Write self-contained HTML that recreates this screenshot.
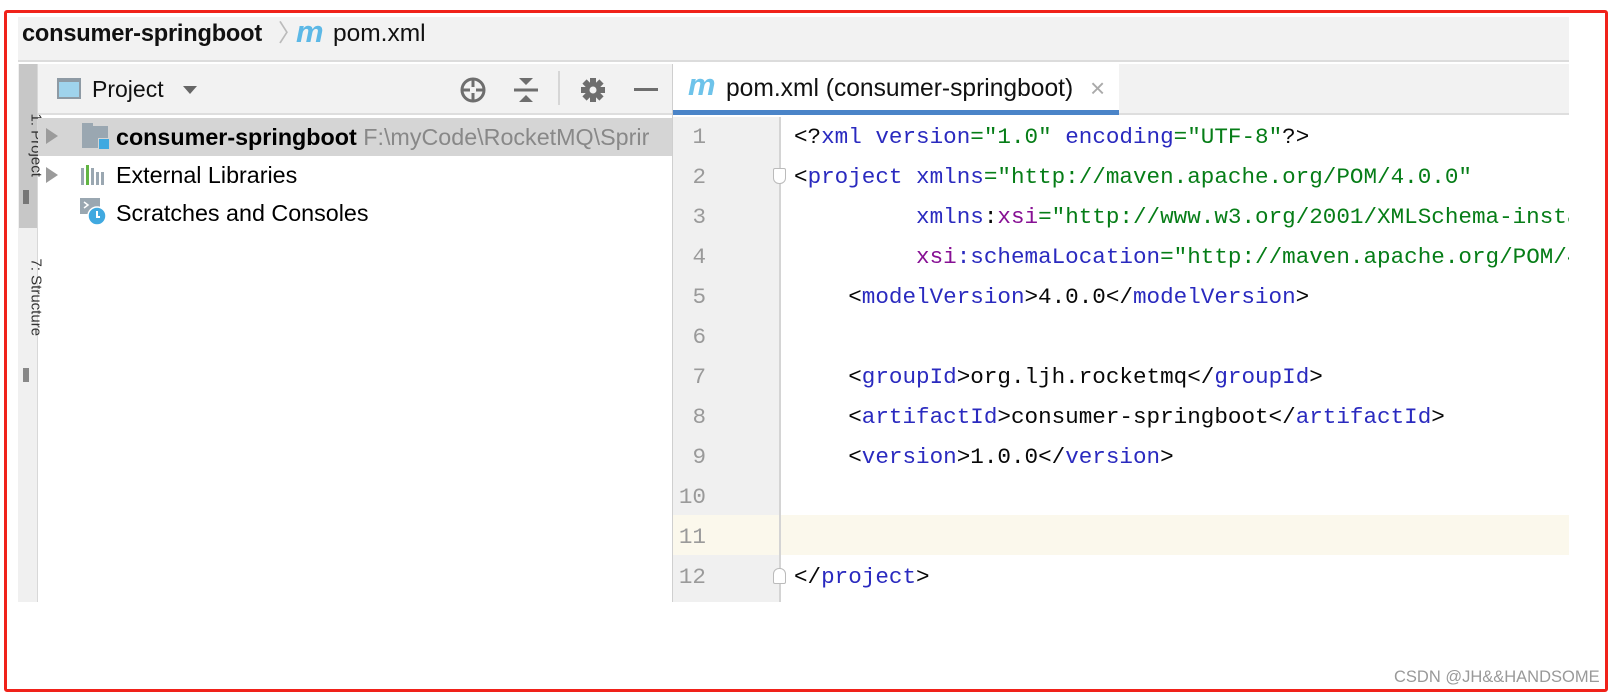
<!DOCTYPE html>
<html><head><meta charset="utf-8"><style>
*{margin:0;padding:0;box-sizing:border-box}
body{width:1611px;height:696px;background:#fff;position:relative;overflow:hidden;font-family:"Liberation Sans",sans-serif}
.abs{position:absolute}
.border{left:4px;top:10px;width:1604px;height:682px;border:3px solid #f0221a;border-radius:3px}
.mono{font-family:"Liberation Mono",monospace;font-size:22.6px;white-space:pre}
.ln{left:673px;width:107px;text-align:right;padding-right:74px;color:#9a9a9a;height:40px;line-height:40px}
.cl{left:794px;height:40px;line-height:40px;color:#080808}
.t{color:#2a2abf}.s{color:#067d17}.p{color:#871094}
.row{left:116px;font-size:23.3px;color:#000;height:38px;line-height:38px;white-space:nowrap}
</style></head><body>
<!-- breadcrumb -->
<div class="abs" style="left:18px;top:17px;width:1551px;height:45px;background:#f2f2f2;border-bottom:2px solid #dcdcdc"></div>
<div class="abs" style="left:22px;top:19px;font-size:23.6px;font-weight:bold;line-height:30px;color:#111;letter-spacing:-0.2px">consumer-springboot</div>
<div class="abs" style="left:278px;top:19px;font-size:24px;color:#bbb;line-height:30px">〉</div>
<div class="abs" style="left:296px;top:15px;font-size:31px;font-style:italic;font-weight:bold;color:#5cb8e6;line-height:34px">m</div>
<div class="abs" style="left:333px;top:19px;font-size:24.5px;line-height:30px;color:#111">pom.xml</div>
<!-- left strip -->
<div class="abs" style="left:18px;top:64px;width:20px;height:538px;background:#f0f0f0;border-right:1px solid #d8d8d8"></div>
<div class="abs" style="left:19px;top:64px;width:18px;height:164px;background:#c7c7c7"></div>
<div class="abs" style="left:23px;top:190px;width:6px;height:14px;background:#777"></div>
<div class="abs" style="left:23px;top:368px;width:6px;height:14px;background:#888"></div>
<div class="abs" style="left:6px;top:135px;transform:rotate(90deg);font-size:15px;color:#333;white-space:nowrap;width:60px">1: Project</div>
<div class="abs" style="left:-4px;top:290px;transform:rotate(90deg);font-size:15px;color:#333;white-space:nowrap;width:80px">7: Structure</div>
<!-- project header -->
<div class="abs" style="left:38px;top:64px;width:634px;height:51px;background:#f2f2f2;border-bottom:2px solid #dedede"></div>
<div class="abs" style="left:57px;top:78px;width:24px;height:21px;border:2px solid #8e9aa4;background:#9fd3ec;border-top-width:4px"></div>
<div class="abs" style="left:92px;top:74px;font-size:23px;line-height:30px;color:#111">Project</div>
<div class="abs" style="left:183px;top:86px;width:0;height:0;border-left:7px solid transparent;border-right:7px solid transparent;border-top:8px solid #666"></div>
<svg class="abs" style="left:458px;top:75px" width="30" height="30" viewBox="0 0 30 30"><circle cx="15" cy="15" r="11" fill="none" stroke="#6e6e6e" stroke-width="3"/><path d="M15 4v8M15 18v8M4 15h8M18 15h8" stroke="#6e6e6e" stroke-width="3"/></svg>
<svg class="abs" style="left:513px;top:76px" width="26" height="28" viewBox="0 0 26 28"><path d="M6 2h14l-7 7z M6 26h14l-7-7z" fill="#6e6e6e"/><rect x="1" y="12.5" width="24" height="3" fill="#6e6e6e"/></svg>
<div class="abs" style="left:558px;top:71px;width:2px;height:34px;background:#d6d6d6"></div>
<svg class="abs" style="left:580px;top:77px" width="26" height="26" viewBox="0 0 26 26"><g fill="#6e6e6e"><circle cx="13" cy="13" r="8"/><rect x="10" y="1" width="6" height="24"/><rect x="1" y="10" width="24" height="6"/><rect x="10" y="1" width="6" height="24" transform="rotate(45 13 13)"/><rect x="10" y="1" width="6" height="24" transform="rotate(-45 13 13)"/></g><circle cx="13" cy="13" r="3.5" fill="#f2f2f2"/></svg>
<div class="abs" style="left:634px;top:88px;width:24px;height:3px;background:#6e6e6e"></div>
<!-- project rows -->
<div class="abs" style="left:38px;top:118px;width:634px;height:38px;background:#d5d5d5"></div>
<div class="abs" style="left:46px;top:128px;border-top:8px solid transparent;border-bottom:8px solid transparent;border-left:12px solid #9b9b9b"></div>
<div class="abs" style="left:46px;top:167px;border-top:8px solid transparent;border-bottom:8px solid transparent;border-left:12px solid #9b9b9b"></div>
<div class="abs" style="left:82px;top:126px;width:26px;height:22px;background:#9aa7b1"></div>
<div class="abs" style="left:82px;top:123px;width:11px;height:5px;background:#9aa7b1"></div>
<div class="abs" style="left:98px;top:138px;width:12px;height:12px;background:#40a9e0;border:1px solid #d5d5d5"></div>
<div class="row abs" style="top:118px;width:556px;overflow:hidden"><b>consumer-springboot</b> <span style="color:#888">F:\myCode\RocketMQ\Sprir</span></div>
<svg class="abs" style="left:80px;top:163px" width="28" height="24"><rect x="1" y="5" width="3" height="17" fill="#9aa7b1"/><rect x="6" y="2" width="3" height="20" fill="#62b543"/><rect x="11" y="5" width="3" height="17" fill="#9aa7b1"/><rect x="16" y="9" width="3" height="13" fill="#9aa7b1"/><rect x="21" y="9" width="3" height="13" fill="#9aa7b1"/></svg>
<div class="row abs" style="top:156px">External Libraries</div>
<svg class="abs" style="left:80px;top:198px" width="30" height="28"><rect x="0" y="0" width="20" height="16" fill="#9aa7b1"/><path d="M4 4l4 3-4 3" stroke="#fff" stroke-width="1.5" fill="none"/><circle cx="17" cy="18" r="9" fill="#40a9e0" stroke="#fff" stroke-width="1.5"/><path d="M17 13v6h3" stroke="#fff" stroke-width="2" fill="none"/></svg>
<div class="row abs" style="top:194px">Scratches and Consoles</div>
<div class="abs" style="left:672px;top:64px;width:1px;height:538px;background:#cfcfcf"></div>
<!-- tab bar -->
<div class="abs" style="left:673px;top:64px;width:896px;height:51px;background:#f2f2f2;border-bottom:2px solid #dedede"></div>
<div class="abs" style="left:673px;top:64px;width:446px;height:51px;background:#fff"></div>
<div class="abs" style="left:673px;top:110px;width:446px;height:5px;background:#4a84c8"></div>
<div class="abs" style="left:688px;top:67px;font-size:31px;font-style:italic;font-weight:bold;color:#6ec3ea;line-height:36px">m</div>
<div class="abs" style="left:726px;top:74px;font-size:24.6px;line-height:30px;color:#111;white-space:nowrap">pom.xml (consumer-springboot)</div>
<div class="abs" style="left:1090px;top:73px;font-size:26px;line-height:30px;color:#aaa">×</div>
<!-- gutter -->
<div class="abs" style="left:673px;top:117px;width:107px;height:485px;background:#f0f0f0"></div>
<div class="abs" style="left:673px;top:515px;width:896px;height:40px;background:#fbf8ec"></div>
<div class="abs" style="left:779px;top:117px;width:2px;height:485px;background:#d4d4d4"></div>
<div class="abs" style="left:773px;top:168px;width:13px;height:16px;border:1.5px solid #bbb;border-radius:2px 2px 6px 6px;background:#fff"></div>
<div class="abs" style="left:773px;top:568px;width:13px;height:16px;border:1.5px solid #bbb;border-radius:6px 6px 2px 2px;background:#fff"></div>
<div class="mono">
<div class="abs ln" style="top:117px">1</div><div class="abs ln" style="top:157px">2</div><div class="abs ln" style="top:197px">3</div><div class="abs ln" style="top:237px">4</div><div class="abs ln" style="top:277px">5</div><div class="abs ln" style="top:317px">6</div><div class="abs ln" style="top:357px">7</div><div class="abs ln" style="top:397px">8</div><div class="abs ln" style="top:437px">9</div><div class="abs ln" style="top:477px">10</div><div class="abs ln" style="top:517px">11</div><div class="abs ln" style="top:557px">12</div>
<div class="abs cl" style="top:117px">&lt;?<span class="t">xml version</span><span class="s">="1.0"</span> <span class="t">encoding</span><span class="s">="UTF-8"</span>?&gt;</div>
<div class="abs cl" style="top:157px">&lt;<span class="t">project xmlns</span><span class="s">="http://maven.apache.org/POM/4.0.0"</span></div>
<div class="abs cl" style="top:197px;width:775px;overflow:hidden">         <span class="t">xmlns</span>:<span class="p">xsi</span><span class="s">="http://www.w3.org/2001/XMLSchema-instance"</span></div>
<div class="abs cl" style="top:237px;width:775px;overflow:hidden">         <span class="p">xsi</span><span class="t">:schemaLocation</span><span class="s">="http://maven.apache.org/POM/4.0.0"</span></div>
<div class="abs cl" style="top:277px">    &lt;<span class="t">modelVersion</span>&gt;4.0.0&lt;/<span class="t">modelVersion</span>&gt;</div>
<div class="abs cl" style="top:357px">    &lt;<span class="t">groupId</span>&gt;org.ljh.rocketmq&lt;/<span class="t">groupId</span>&gt;</div>
<div class="abs cl" style="top:397px">    &lt;<span class="t">artifactId</span>&gt;consumer-springboot&lt;/<span class="t">artifactId</span>&gt;</div>
<div class="abs cl" style="top:437px">    &lt;<span class="t">version</span>&gt;1.0.0&lt;/<span class="t">version</span>&gt;</div>
<div class="abs cl" style="top:557px">&lt;/<span class="t">project</span>&gt;</div>
</div>
<div class="abs" style="left:1394px;top:668px;font-size:16.5px;color:#999;line-height:18px">CSDN @JH&amp;&amp;HANDSOME</div>
<div class="abs border"></div>
</body></html>
